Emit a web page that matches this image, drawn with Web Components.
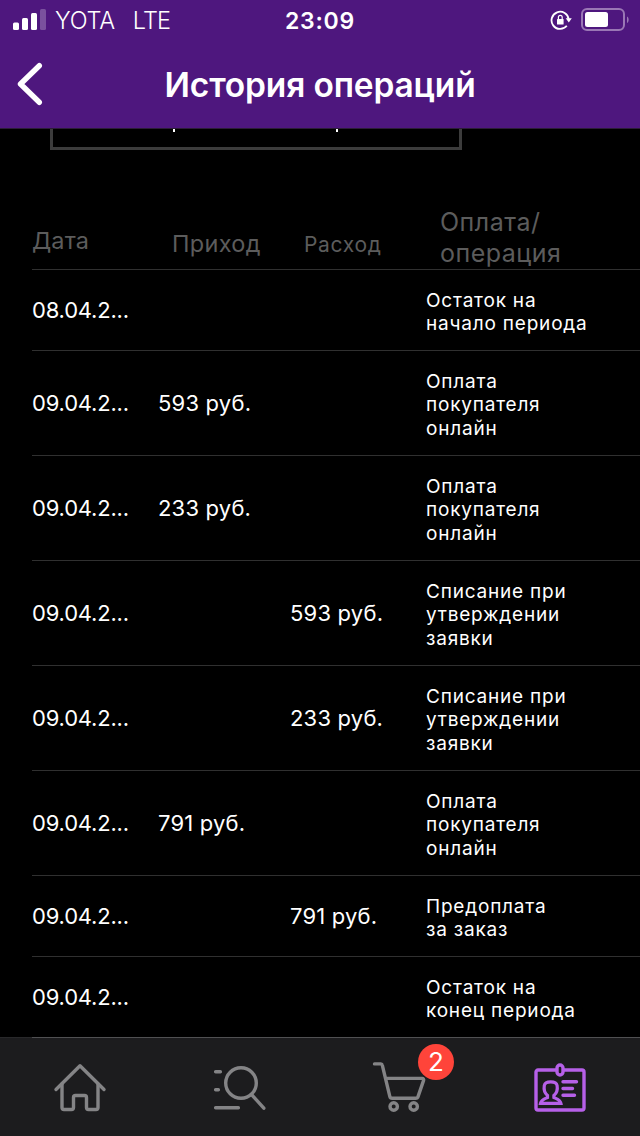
<!DOCTYPE html>
<html lang="ru">
<head>
<meta charset="utf-8">
<title>История операций</title>
<style>
  body {
    margin: 0;
    background: #000;
    color: #fff;
    font-family: Inter, "Liberation Sans", sans-serif;
  }
</style>
</head>
<body>
<app-screen>
  <status-bar slot="top" carrier="YOTA" network="LTE" time="23:09"></status-bar>
  <nav-header slot="top">История операций</nav-header>
  <clipped-button></clipped-button>
  <history-head></history-head>
  <history-list></history-list>
  <tab-bar slot="bottom" badge="2"></tab-bar>
</app-screen>

<script>
class AppScreen extends HTMLElement {
  constructor() {
    super();
    this.attachShadow({ mode: 'open' }).innerHTML = `
      <style>
        :host {
          display: flex;
          flex-direction: column;
          width: 640px;
          height: 1136px;
          overflow: hidden;
          background: #000;
        }
        .content {
          flex: 1;
          min-height: 0;
          overflow: hidden;
        }
      </style>
      <slot name="top"></slot>
      <div class="content"><slot></slot></div>
      <slot name="bottom"></slot>
    `;
  }
}

class StatusBar extends HTMLElement {
  connectedCallback() {
    this.attachShadow({ mode: 'open' }).innerHTML = `
      <style>
        :host {
          display: grid;
          grid-template-columns: 1fr auto 1fr;
          align-items: center;
          height: 40px;
          flex: none;
          background: #4e177e;
          font-size: 23.5px;
          line-height: 40px;
        }
        svg { display: block; }
        span, .time { padding-top: 2px; line-height: 38px; }
        .left, .right { display: flex; align-items: center; }
        .left { padding-left: 13px; font-weight: 300; }
        .carrier { margin-left: 9px; letter-spacing: -0.2px; }
        .network { margin-left: 18px; letter-spacing: -0.9px; }
        .time { font-size: 23px; font-weight: 600; letter-spacing: .8px; }
        .right { justify-content: flex-end; padding-right: 11px; }
        .battery { margin-left: 9px; }
      </style>
      <div class="left">
        <svg width="33" height="22" viewBox="0 0 33 22" fill="#fff">
          <rect x="0" y="13.500" width="6" height="7.500" rx="1.5"/>
          <rect x="9" y="9" width="6" height="12" rx="1.5"/>
          <rect x="18" y="4" width="6" height="17" rx="1.5"/>
          <rect x="27" y="0" width="6" height="21" rx="1.5" opacity=".25"/>
        </svg>
        <span class="carrier">${this.getAttribute('carrier')}</span>
        <span class="network">${this.getAttribute('network')}</span>
      </div>
      <div class="time">${this.getAttribute('time')}</div>
      <div class="right">
        <svg width="22" height="22" viewBox="0 0 22 22">
          <path d="M18.700 10.500A8.600 8.600 0 1 0 16.800 16.800" fill="none" stroke="#fff" stroke-width="1.800"/>
          <path d="M15.700 9.300h6.100l-3 4.200z" fill="#fff"/>
          <rect x="7" y="10" width="6.600" height="5.500" rx=".6" fill="#fff"/>
          <path d="M8.400 10.500V8.200a1.900 1.900 0 0 1 3.800 0V10.500" fill="none" stroke="#fff" stroke-width="1.200"/>
        </svg>
        <svg class="battery" width="48" height="24" viewBox="0 0 48 24">
          <rect x="1" y="1" width="42" height="21" rx="5" fill="none" stroke="#9a77b5" stroke-width="2"/>
          <rect x="4" y="4" width="23" height="15" rx="2.5" fill="#fff"/>
          <path d="M46 8.500c2.200 1 2.200 5.500 0 6.500z" fill="#9a77b5"/>
        </svg>
      </div>
    `;
  }
}

class NavHeader extends HTMLElement {
  constructor() {
    super();
    this.attachShadow({ mode: 'open' }).innerHTML = `
      <style>
        :host {
          display: grid;
          grid-template-columns: 60px 1fr 60px;
          align-items: center;
          box-sizing: border-box;
          height: 89px;
          flex: none;
          background: #4e177e;
          border-bottom: 1px solid #2b1d36;
        }
        svg { display: block; margin-left: 17px; }
        h1 {
          margin: 0;
          padding-top: 2px;
          font-size: 33.5px;
          line-height: 40px;
          font-weight: 600;
          letter-spacing: -0.15px;
          text-align: center;
          white-space: nowrap;
        }
      </style>
      <svg width="27" height="44" viewBox="0 0 27 44" fill="none" stroke="#fff" stroke-width="5.4" stroke-linecap="round" stroke-linejoin="round">
        <path d="M22.300 3.700L3.500 22L22.300 40.300"/>
      </svg>
      <h1><slot></slot></h1>
    `;
  }
}

// Button scrolled under the header: only its bottom edge and two descenders show
class ClippedButton extends HTMLElement {
  constructor() {
    super();
    this.attachShadow({ mode: 'open' }).innerHTML = `
      <style>
        :host {
          display: flex;
          gap: 161px;
          box-sizing: border-box;
          width: 412px;
          height: 21px;
          margin-left: 50px;
          padding-left: 120px;
          border: 3px solid #3c3c3c;
          border-top: 0;
        }
        i { width: 2px; height: 3px; background: #fff; }
      </style>
      <i></i><i></i>
    `;
  }
}

class HistoryHead extends HTMLElement {
  constructor() {
    super();
    this.attachShadow({ mode: 'open' }).innerHTML = `
      <style>
        :host {
          display: grid;
          grid-template-columns: 140px 132px 136px 1fr;
          align-items: end;
          box-sizing: border-box;
          height: 120px;
          margin-left: 32px;
          border-bottom: 1px solid #303030;
          color: #5c5c5c;
          font-weight: 400;
        }
        .date { font-size: 23.5px; line-height: 30px; padding-bottom: 13px; letter-spacing: .1px; }
        .income { font-size: 23.5px; line-height: 30px; padding-bottom: 10px; letter-spacing: .3px; }
        .expense { font-size: 21px; line-height: 30px; padding-bottom: 9px; letter-spacing: .7px; }
        .kind { font-size: 25px; line-height: 31px; letter-spacing: .5px; }
      </style>
      <div class="date">Дата</div>
      <div class="income">Приход</div>
      <div class="expense">Расход</div>
      <div class="kind">Оплата/<br>операция</div>
    `;
  }
}

class HistoryRow extends HTMLElement {
  connectedCallback() {
    const get = (name) => this.getAttribute(name) || '';
    this.attachShadow({ mode: 'open' }).innerHTML = `
      <style>
        :host {
          display: grid;
          grid-template-columns: 126px 132px 136px 1fr;
          align-items: center;
          box-sizing: border-box;
          height: 81px;
          border-bottom: 1px solid #303030;
          font-size: 22px;
          letter-spacing: .2px;
          white-space: nowrap;
        }
        :host([lines="3"]) { height: 105px; }
        .date { letter-spacing: -0.2px; }
        .text {
          font-size: 19px;
          line-height: 23.5px;
          letter-spacing: .8px;
          padding-top: 4px;
        }
      </style>
      <div class="date">${get('date')}</div>
      <div>${get('income')}</div>
      <div>${get('expense')}</div>
      <div class="text"><slot></slot></div>
    `;
  }
}

const OPERATIONS = [
  { date: '08.04.2...', text: ['Остаток на', 'начало периода'] },
  { date: '09.04.2...', income: '593 руб.', text: ['Оплата', 'покупателя', 'онлайн'] },
  { date: '09.04.2...', income: '233 руб.', text: ['Оплата', 'покупателя', 'онлайн'] },
  { date: '09.04.2...', expense: '593 руб.', text: ['Списание при', 'утверждении', 'заявки'] },
  { date: '09.04.2...', expense: '233 руб.', text: ['Списание при', 'утверждении', 'заявки'] },
  { date: '09.04.2...', income: '791 руб.', text: ['Оплата', 'покупателя', 'онлайн'] },
  { date: '09.04.2...', expense: '791 руб.', text: ['Предоплата', 'за заказ'] },
  { date: '09.04.2...', text: ['Остаток на', 'конец периода'] },
];

class HistoryList extends HTMLElement {
  connectedCallback() {
    this.attachShadow({ mode: 'open' }).innerHTML = `
      <style>
        :host { display: block; margin-left: 32px; }
      </style>
      ${OPERATIONS.map((op) => `
        <history-row date="${op.date}" income="${op.income || ''}" expense="${op.expense || ''}" lines="${op.text.length}">
          ${op.text.join('<br>')}
        </history-row>
      `).join('')}
    `;
  }
}

class TabBar extends HTMLElement {
  connectedCallback() {
    this.attachShadow({ mode: 'open' }).innerHTML = `
      <style>
        :host {
          display: grid;
          grid-template-columns: repeat(4, 1fr);
          height: 99px;
          flex: none;
          background: linear-gradient(to right, #28282a 32px, #505052 32px) top / 100% 1px no-repeat #1c1c1e;
        }
        .tab {
          position: relative;
          display: flex;
          justify-content: center;
          padding-top: 23px;
          color: #848486;
        }
        .active { color: #b660e8; }
        svg {
          display: block;
          width: 56px;
          height: 56px;
          fill: none;
          stroke: currentColor;
          stroke-width: 3.4;
          stroke-linecap: round;
          stroke-linejoin: round;
        }
        .badge {
          position: absolute;
          left: 98px;
          top: 7px;
          width: 36px;
          height: 36px;
          border-radius: 50%;
          background: #ff443a;
          color: #fff;
          font-size: 26px;
          line-height: 36px;
          text-align: center;
        }
      </style>
      <div class="tab">
        <svg viewBox="0 0 56 56">
          <path d="M4 29.5L28 5.7L52 29.5"/>
          <path d="M10 24v23.5a2 2 0 0 0 2 2h7.500a2 2 0 0 0 2-2V37.500a2 2 0 0 1 2-2h9a2 2 0 0 1 2 2V47.500a2 2 0 0 0 2 2h7.500a2 2 0 0 0 2-2V24"/>
        </svg>
      </div>
      <div class="tab">
        <svg viewBox="0 0 56 56">
          <circle cx="29" cy="23" r="15.300"/>
          <path d="M39.500 34.500L51.800 48.200M3.600 11.700h4.800M3.600 29.700h2.800M3.600 47.700h22.800"/>
        </svg>
      </div>
      <div class="tab">
        <svg viewBox="0 0 56 56">
          <path d="M2.500 3.900h6.300a1.500 1.500 0 0 1 1.500 1.200l7.500 31.200a2.500 2.500 0 0 0 2.500 1.900h23.400a2.500 2.500 0 0 0 2.400-1.800l5.500-16a1.500 1.500 0 0 0-1.500-2H14"/>
          <circle cx="21.700" cy="46.500" r="3.700"/>
          <circle cx="41.700" cy="46.500" r="3.700"/>
        </svg>
        <span class="badge">${this.getAttribute('badge')}</span>
      </div>
      <div class="tab active">
        <svg viewBox="0 0 56 56">
          <path d="M24 10H6a2 2 0 0 0-2 2v36a2 2 0 0 0 2 2h44a2 2 0 0 0 2-2V12a2 2 0 0 0-2-2H32"/>
          <rect x="25" y="5" width="6" height="10" rx="3"/>
          <path d="M31 21.700h13.500M31 28.500h9.500M31 35.300h11.500"/>
          <path stroke-width="3.200" stroke-linejoin="miter" d="M15.500 35.500c-2.800-2.500-3.900-6-3.200-10c1-4.900 11.800-4.900 12.800 0c.7 4-.4 7.500-3.200 10v2c2.500 1.200 6.200 2 7 5.800H8.500c.8-3.800 4.500-4.600 7-5.800z"/>
        </svg>
      </div>
    `;
  }
}

customElements.define('app-screen', AppScreen);
customElements.define('status-bar', StatusBar);
customElements.define('nav-header', NavHeader);
customElements.define('clipped-button', ClippedButton);
customElements.define('history-head', HistoryHead);
customElements.define('history-row', HistoryRow);
customElements.define('history-list', HistoryList);
customElements.define('tab-bar', TabBar);
</script>
</body>
</html>
